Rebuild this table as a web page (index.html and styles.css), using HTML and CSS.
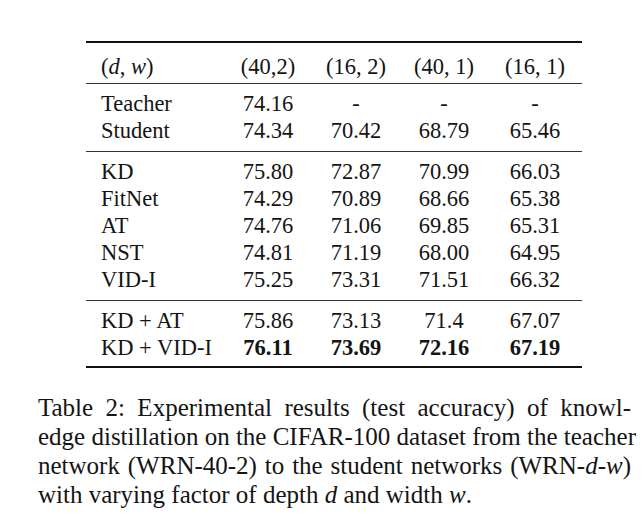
FILE: index.html
```html
<!DOCTYPE html>
<html>
<head>
<meta charset="utf-8">
<link rel="stylesheet" href="styles.css">
</head>
<body>
<div class="page">
  <table class="results">
    <colgroup>
      <col class="c0"><col class="cn"><col class="cn"><col class="cn"><col class="c4">
    </colgroup>
    <thead>
      <tr><th class="name">(<i>d</i>, <i>w</i>)</th><th>(40,2)</th><th>(16, 2)</th><th>(40, 1)</th><th>(16, 1)</th></tr>
    </thead>
    <tbody class="grp">
      <tr><td class="name">Teacher</td><td>74.16</td><td>-</td><td>-</td><td>-</td></tr>
      <tr><td class="name">Student</td><td>74.34</td><td>70.42</td><td>68.79</td><td>65.46</td></tr>
    </tbody>
    <tbody class="grp">
      <tr><td class="name">KD</td><td>75.80</td><td>72.87</td><td>70.99</td><td>66.03</td></tr>
      <tr><td class="name">FitNet</td><td>74.29</td><td>70.89</td><td>68.66</td><td>65.38</td></tr>
      <tr><td class="name">AT</td><td>74.76</td><td>71.06</td><td>69.85</td><td>65.31</td></tr>
      <tr><td class="name">NST</td><td>74.81</td><td>71.19</td><td>68.00</td><td>64.95</td></tr>
      <tr><td class="name">VID-I</td><td>75.25</td><td>73.31</td><td>71.51</td><td>66.32</td></tr>
    </tbody>
    <tbody class="grp last">
      <tr><td class="name">KD + AT</td><td>75.86</td><td>73.13</td><td>71.4</td><td>67.07</td></tr>
      <tr><td class="name">KD + VID-I</td><td class="best">76.11</td><td class="best">73.69</td><td class="best">72.16</td><td class="best">67.19</td></tr>
    </tbody>
  </table>
  <div class="caption">
    <span class="line">Table 2: Experimental results (test accuracy) of knowl-</span>
    <span class="line">edge distillation on the CIFAR-100 dataset from the teacher</span>
    <span class="line">network (WRN-40-2) to the student networks (WRN-<i>d</i>-<i>w</i>)</span>
    <span class="line end">with varying factor of depth <i>d</i> and width <i>w</i>.</span>
  </div>
</div>
</body>
</html>
```

FILE: styles.css
```css
html, body {
  margin: 0;
  padding: 0;
  background: #ffffff;
}

.page {
  width: 644px;
  height: 518px;
  overflow: hidden;
  color: #141414;
  font-family: "Liberation Serif", "Times New Roman", serif;
}

.results {
  border-collapse: collapse;
  margin: 41px 0 0 86px;
  width: 496px;
  table-layout: fixed;
  font-size: 22.5px;
}

.c0 { width: 138px; }
.cn { width: 88px; }
.c4 { width: 94px; }

.results th,
.results td {
  padding: 0;
  line-height: 27px;
  text-align: center;
  font-weight: normal;
  white-space: nowrap;
}

.results .name {
  text-align: left;
  padding-left: 15px;
}

.results thead {
  border-top: 2px solid #111;
  border-bottom: 1px solid #333;
}

.results thead th {
  padding-top: 10px;
  padding-bottom: 3px;
}

.grp {
  border-bottom: 1px solid #333;
}

.grp.last {
  border-bottom: 2px solid #111;
}

.grp tr:first-child td { padding-top: 6px; }
.grp tr:last-child td { padding-bottom: 7px; }
.grp.last tr:first-child td { padding-top: 6px; }
.grp.last tr:last-child td { padding-bottom: 5px; }

.results .best {
  font-weight: bold;
}

.caption {
  margin: 25px 0 0 38px;
  width: 593px;
  font-size: 25px;
  line-height: 29px;
}

.caption .line {
  display: block;
  text-align: justify;
  text-align-last: justify;
  white-space: nowrap;
}

.caption .line.end {
  text-align: left;
  text-align-last: left;
}
```
